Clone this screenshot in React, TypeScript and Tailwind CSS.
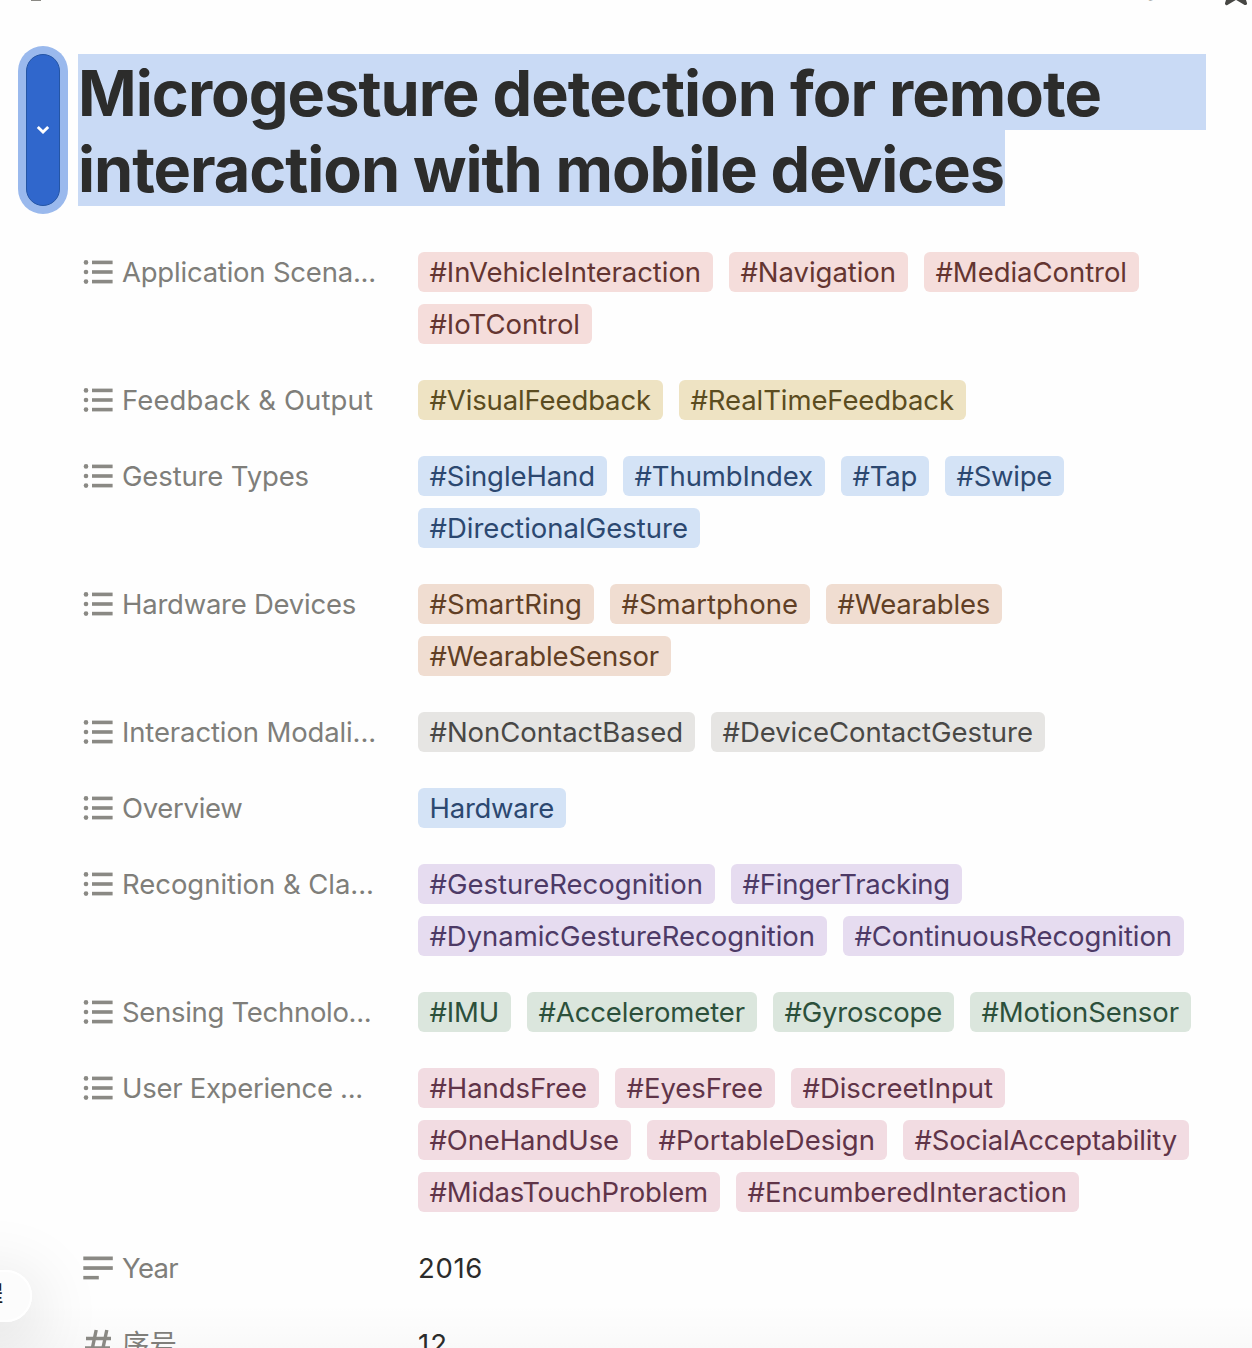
import { useLayoutEffect, useRef, useState } from "react";

type Tag = [label: string, width: number];
type Property = { name: string; nameWidth: number; tone: string; tags: Tag[] };

const RED = "bg-[#f5dddb] text-[#643531]";
const YELLOW = "bg-[#eee3c3] text-[#5b4c20]";
const BLUE = "bg-[#d4e3f6] text-[#2c4870]";
const ORANGE = "bg-[#f0ddd1] text-[#613f25]";
const GRAY = "bg-[#e6e5e3] text-[#494846]";
const PURPLE = "bg-[#e6dcf0] text-[#4d3a66]";
const GREEN = "bg-[#dbe6dd] text-[#2c503b]";
const PINK = "bg-[#f2dce2] text-[#603448]";

const properties: Property[] = [
  { name: "Application Scena...", nameWidth: 254, tone: RED, tags: [["#InVehicleInteraction", 295], ["#Navigation", 179], ["#MediaControl", 215], ["#IoTControl", 174]] },
  { name: "Feedback & Output", nameWidth: 251, tone: YELLOW, tags: [["#VisualFeedback", 245], ["#RealTimeFeedback", 287]] },
  { name: "Gesture Types", nameWidth: 187, tone: BLUE, tags: [["#SingleHand", 189], ["#ThumbIndex", 202], ["#Tap", 88], ["#Swipe", 119], ["#DirectionalGesture", 282]] },
  { name: "Hardware Devices", nameWidth: 234, tone: ORANGE, tags: [["#SmartRing", 176], ["#Smartphone", 200], ["#Wearables", 176], ["#WearableSensor", 253]] },
  { name: "Interaction Modali...", nameWidth: 254, tone: GRAY, tags: [["#NonContactBased", 277], ["#DeviceContactGesture", 334]] },
  { name: "Overview", nameWidth: 120.5, tone: BLUE, tags: [["Hardware", 148]] },
  { name: "Recognition & Cla...", nameWidth: 252, tone: PURPLE, tags: [["#GestureRecognition", 297], ["#FingerTracking", 231], ["#DynamicGestureRecognition", 409], ["#ContinuousRecognition", 341]] },
  { name: "Sensing Technolo...", nameWidth: 249.5, tone: GREEN, tags: [["#IMU", 93], ["#Accelerometer", 230], ["#Gyroscope", 181], ["#MotionSensor", 221]] },
  { name: "User Experience ...", nameWidth: 241, tone: PINK, tags: [["#HandsFree", 181], ["#EyesFree", 160], ["#DiscreetInput", 214], ["#OneHandUse", 213], ["#PortableDesign", 240], ["#SocialAcceptability", 286], ["#MidasTouchProblem", 302], ["#EncumberedInteraction", 343]] },
];

/** Tracks a single line of text so that it spans the given width. */
function FitText({ text, width }: { text: string; width: number }) {
  const ref = useRef<HTMLSpanElement>(null);
  const [spacing, setSpacing] = useState(0);
  useLayoutEffect(() => {
    const el = ref.current;
    if (!el) return;
    el.style.letterSpacing = "0px";
    const natural = el.getBoundingClientRect().width;
    const next = (width - natural) / text.length;
    el.style.letterSpacing = `${next}px`;
    setSpacing(next);
  }, [text, width]);
  return (
    <span ref={ref} className="inline-block whitespace-pre" style={{ letterSpacing: `${spacing}px` }}>
      {text}
    </span>
  );
}

function ListIcon() {
  return (
    <svg className="h-10 w-[30px] shrink-0" viewBox="0 0 30 40" fill="#8a8984">
      {[10.4, 20, 29.6].map((y) => (
        <g key={y}>
          <circle cx="3" cy={y} r="2.3" />
          <rect x="9" y={y - 1.8} width="20.6" height="3.6" />
        </g>
      ))}
    </svg>
  );
}

function TextIcon() {
  return (
    <svg className="h-10 w-[30px] shrink-0" viewBox="0 0 30 40" fill="#8a8984">
      <rect x="0.3" y="8.5" width="29.5" height="3.7" />
      <rect x="0.3" y="18.2" width="29.5" height="3.7" />
      <rect x="0.3" y="27.9" width="15.5" height="3.5" />
    </svg>
  );
}

function HashIcon() {
  return (
    <svg className="h-10 w-[30px] shrink-0" viewBox="0 0 30 40" fill="none" stroke="#8a8984" strokeWidth="3.4">
      <path d="M3 14.5H28M2 24H27M13.2 6L7.7 32M23.8 6L18.3 32" />
    </svg>
  );
}

function PropertyName({ icon, text, width }: { icon: React.ReactNode; text: string; width: number }) {
  return (
    <div className="flex h-10 w-[335px] shrink-0 items-center gap-[9px] text-[#7f7e7a]">
      {icon}
      <FitText text={text} width={width} />
    </div>
  );
}

export default function App() {
  return (
    <div className="relative flex h-[1348px] w-[1252px] flex-col overflow-hidden bg-[#fefefe] font-['Inter','Noto_Sans_CJK_SC',sans-serif] text-[27.5px] leading-10 text-[#2c2c2b]">
      <div className="absolute inset-x-0 bottom-0 h-11 bg-linear-to-b from-transparent to-black/[0.02]" />
      <div className="absolute -left-12 top-[1270px] h-[52px] w-20 rounded-full shadow-[0_16px_70px_8px_rgba(0,0,0,0.12)]" />

      <header className="relative flex h-[54px] shrink-0">
        <div className="absolute left-[31px] top-0 h-px w-[10px] bg-[#8a8984]" />
        <span className="absolute -top-[22px] left-[1109px] text-[28px] font-medium leading-6 text-[#4a4945]">Share</span>
        <svg className="absolute left-[1220px] top-[-26px]" width="32" height="32" viewBox="0 0 32 32" fill="none" stroke="#474744" strokeWidth="3.2" strokeLinejoin="round">
          <path d="M16 2.5l3.7 8.6 9.3.8-7.1 6.2 3.5 11.4L16 24 6.6 29.5l3.5-11.4L3 11.9l9.3-.8z" />
        </svg>
      </header>

      <div className="relative flex h-[152px] shrink-0 pl-[26px]">
        <button className="flex h-[152px] w-[34px] items-center justify-center rounded-full border border-[#2455a5] bg-[#3067cc] shadow-[0_0_0_8px_#9ab9ed]">
          <svg width="14" height="10" viewBox="0 0 14 10" fill="none" stroke="white" strokeWidth="2.9">
            <path d="M1.8 2L7 7l5.2-5" />
          </svg>
        </button>
        <h1 className="ml-[18px] flex w-[1128px] flex-col text-[63px] font-bold leading-[76px]">
          <span className="relative z-10 h-[76px] bg-[#c9daf5] pt-px"><FitText text="Microgesture detection for remote" width={1023} /></span>
          <span className="h-[76px] w-[927px] bg-[#c9daf5] pt-px"><FitText text="interaction with mobile devices" width={926} /></span>
        </h1>
      </div>

      <main className="relative mt-[46px] flex flex-col gap-9 pl-[83px]">
        {properties.map((p) => (
          <section key={p.name} className="flex">
            <PropertyName icon={<ListIcon />} text={p.name} width={p.nameWidth} />
            <div className="flex w-[788px] flex-wrap gap-x-4 gap-y-3">
              {p.tags.map(([label, width]) => (
                <span key={label} className={`h-10 rounded-[6px] pl-[11.5px] ${p.tone}`} style={{ width }}>
                  <FitText text={label} width={width - 23.5} />
                </span>
              ))}
            </div>
          </section>
        ))}
        <section className="flex">
          <PropertyName icon={<TextIcon />} text="Year" width={56} />
          <FitText text="2016" width={65} />
        </section>
        <section className="flex">
          <PropertyName icon={<HashIcon />} text="序号" width={55} />
          <FitText text="12" width={30} />
        </section>
      </main>

      <div className="absolute -left-12 top-[1270px] h-[52px] w-20 rounded-full border-2 border-white bg-[#fcfcfc]">
        <span className="absolute left-[27px] top-px text-[22px] font-medium leading-10 text-[#1d1d1d]">程</span>
      </div>
    </div>
  );
}
